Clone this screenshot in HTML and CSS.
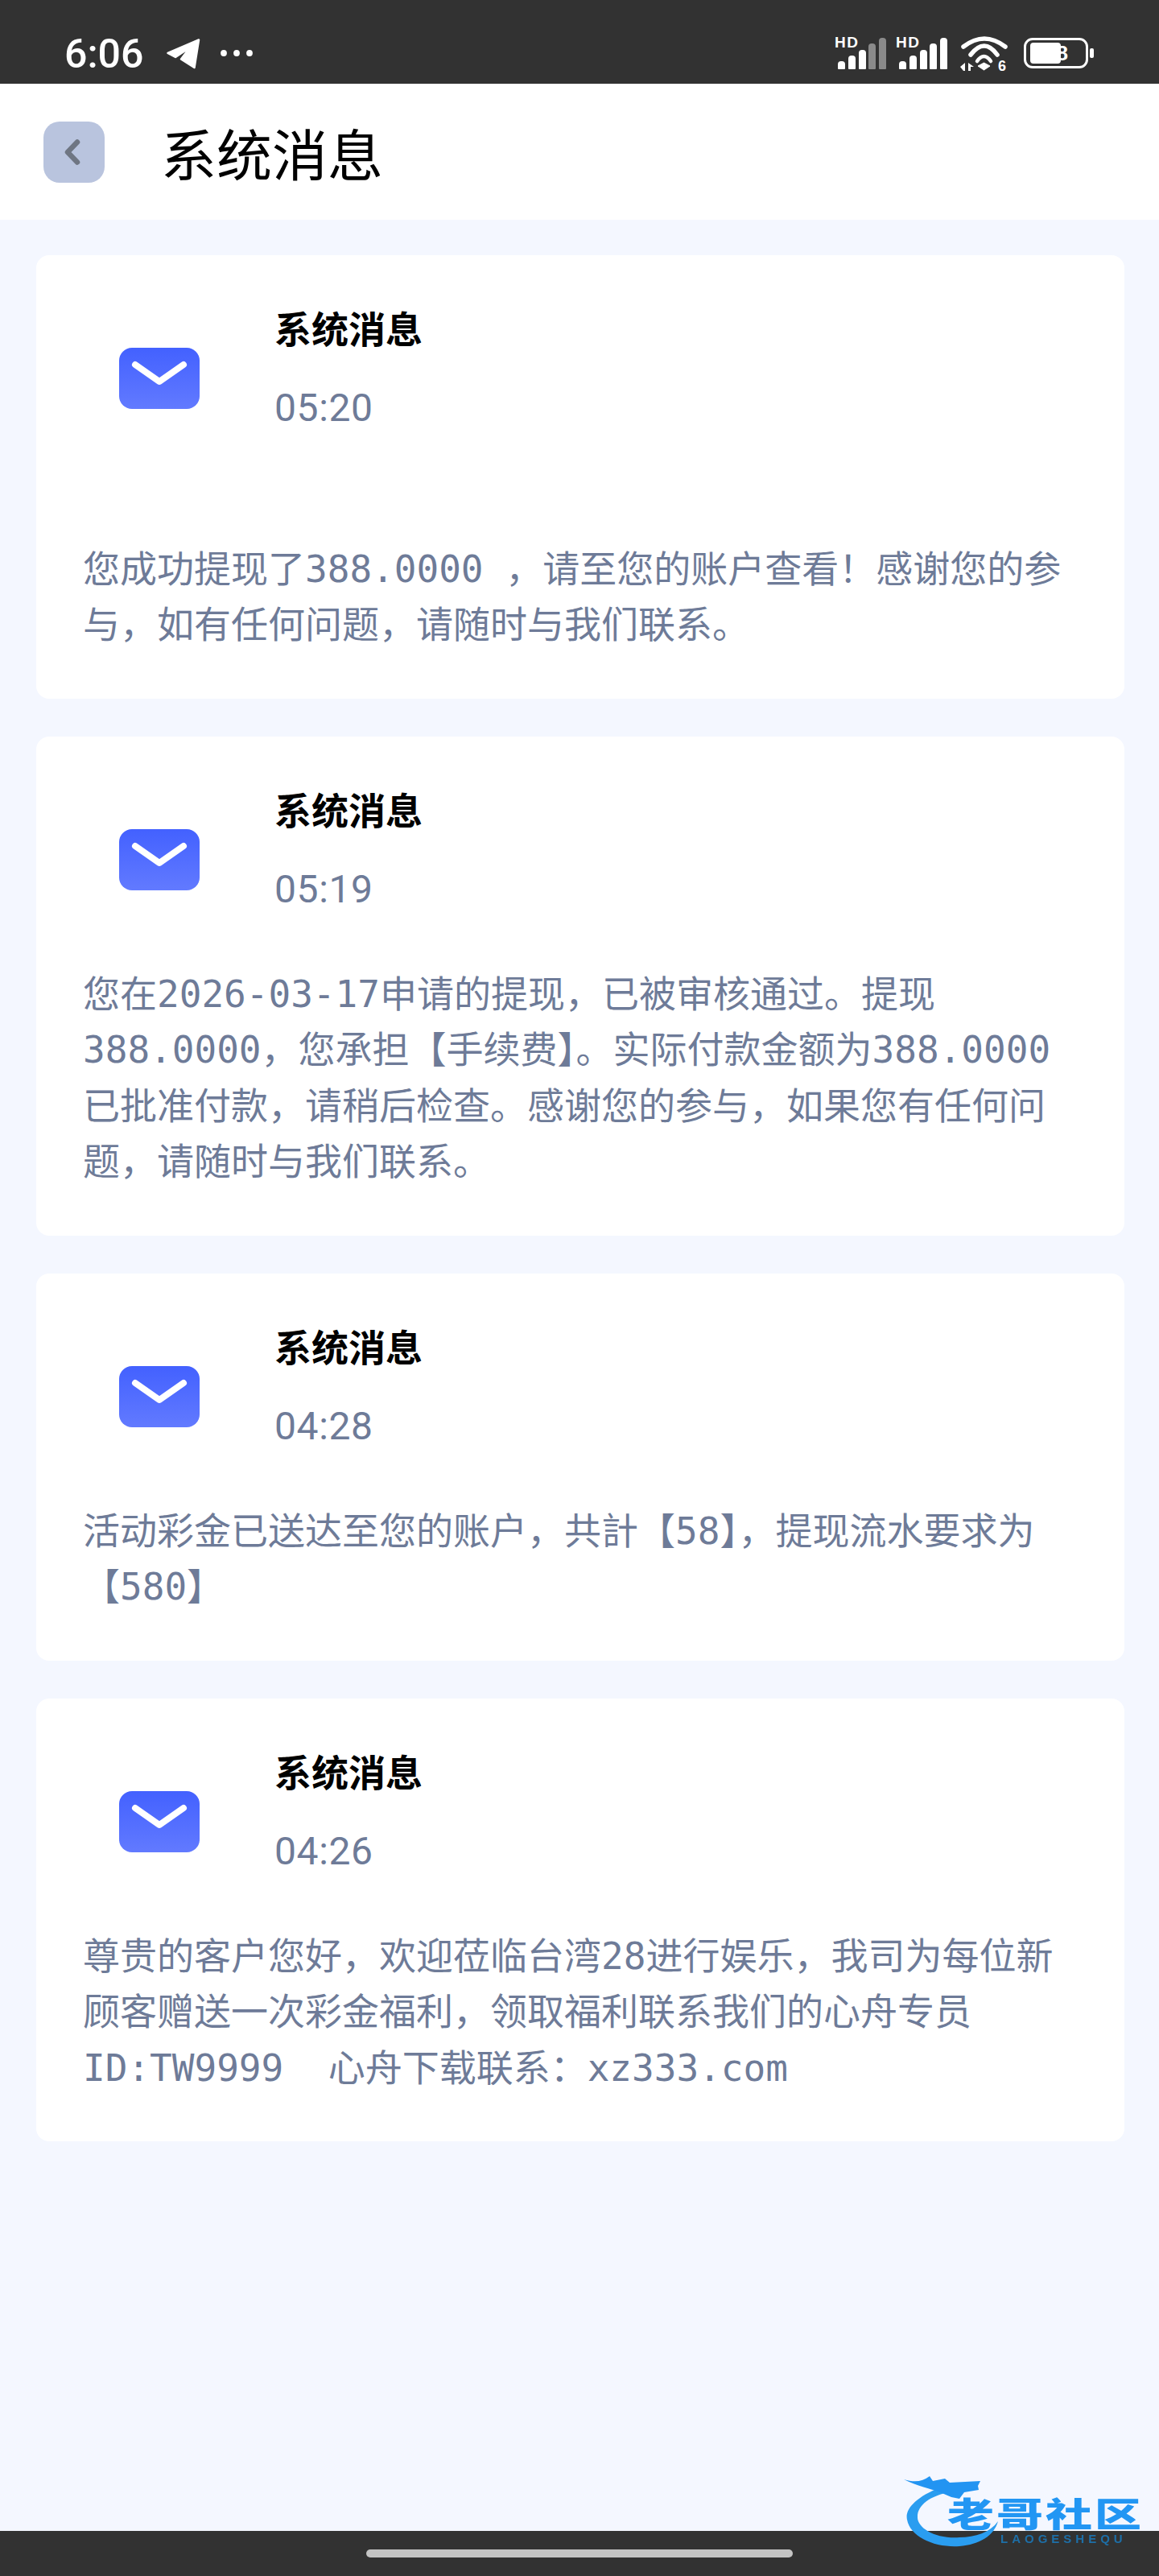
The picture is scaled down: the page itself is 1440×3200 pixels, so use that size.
FILE: index.html
```html
<!DOCTYPE html>
<html lang="zh-CN">
<head>
  <meta charset="UTF-8" />
  <title>系统消息</title>
  <link rel="stylesheet" href="styles.css">
</head>

<body>
  <div class="phone">
    <!-- status bar -->
    <div class="status-bar">
      <div class="status-left">
        <span class="clock">6:06</span>
        <svg class="icon-send" width="42" height="38" viewBox="0 0 42 38">
          <path d="M1.5 18 L40 1.5 L34.5 36 L18 25.5 L29 11 L11 23 Z" fill="#fff" stroke="#fff" stroke-width="2.5" stroke-linejoin="round"/>
        </svg>
        <svg class="icon-dots" width="40" height="8" viewBox="0 0 40 8">
          <circle cx="4" cy="4" r="3.9" fill="#fff"/>
          <circle cx="20" cy="4" r="3.9" fill="#fff"/>
          <circle cx="36" cy="4" r="3.9" fill="#fff"/>
        </svg>
      </div>
      <div class="status-right">
        <div class="signal">
          <span class="hd">HD</span>
          <div class="bars">
            <i class="b1"></i><i class="b2"></i><i class="b3"></i><i class="b4 off"></i><i class="b5 off"></i>
          </div>
        </div>
        <div class="signal">
          <span class="hd">HD</span>
          <div class="bars">
            <i class="b1"></i><i class="b2"></i><i class="b3"></i><i class="b4"></i><i class="b5"></i>
          </div>
        </div>
        <svg class="icon-wifi" width="60" height="48" viewBox="0 0 60 48">
          <path d="M4 14 Q30 -6 56 14" fill="none" stroke="#fff" stroke-width="5.5" stroke-linecap="round"/>
          <path d="M13 24 Q30 2 46 24" fill="none" stroke="#fff" stroke-width="5.5" stroke-linecap="round"/>
          <path d="M21 32 Q29.5 20 38 32" fill="none" stroke="#fff" stroke-width="4.5" stroke-linecap="round"/>
          <path d="M22 38 L29.5 34 L37 38 L29.5 43 Z" fill="#fff" stroke="#fff" stroke-width="1" stroke-linejoin="round"/>
          <path d="M0 39 L6 34 V44 H4 Z M10 44 V34 L17 39 H13 V44 Z" fill="#fff"/>
          <text x="47" y="44" class="wifi-six">6</text>
        </svg>
        <div class="battery">
          <div class="battery-case">
            <div class="battery-fill"><span class="battery-num">38</span></div>
          </div>
          <div class="battery-nub"></div>
        </div>
      </div>
    </div>

    <!-- header -->
    <div class="page-header">
      <button class="back-btn" aria-label="返回">
        <svg class="back-arrow" width="20" height="32" viewBox="0 0 20 32">
          <path d="M16 3.5 L4 16 L16 28.5" fill="none" stroke="#6f7683" stroke-width="6.5" stroke-linecap="round" stroke-linejoin="round"/>
        </svg>
      </button>
      <h1 class="page-title">系统消息</h1>
    </div>

    <!-- message list -->
    <div class="msg-list">
      <div class="msg-card">
        <div class="msg-head">
          <svg class="mail-icon" width="100" height="76" viewBox="0 0 100 76">
            <rect width="100" height="76" rx="16" fill="url(#mailGrad)"/>
            <path d="M20 21 L50 42 L80 21" fill="none" stroke="#fff" stroke-width="8" stroke-linecap="round" stroke-linejoin="round"/>
          </svg>
          <div class="msg-meta">
            <div class="msg-title">系统消息</div>
            <div class="msg-time">05:20</div>
          </div>
        </div>
        <div class="msg-text"><br>您成功提现了388.0000 ，请至您的账户查看！感谢您的参与，如有任何问题，请随时与我们联系。</div>
      </div>

      <div class="msg-card">
        <div class="msg-head">
          <svg class="mail-icon" width="100" height="76" viewBox="0 0 100 76">
            <rect width="100" height="76" rx="16" fill="url(#mailGrad)"/>
            <path d="M20 21 L50 42 L80 21" fill="none" stroke="#fff" stroke-width="8" stroke-linecap="round" stroke-linejoin="round"/>
          </svg>
          <div class="msg-meta">
            <div class="msg-title">系统消息</div>
            <div class="msg-time">05:19</div>
          </div>
        </div>
        <div class="msg-text">您在2026-03-17申请的提现，已被审核通过。提现388.0000，您承担【手续费】。实际付款金额为388.0000已批准付款，请稍后检查。感谢您的参与，如果您有任何问题，请随时与我们联系。</div>
      </div>

      <div class="msg-card">
        <div class="msg-head">
          <svg class="mail-icon" width="100" height="76" viewBox="0 0 100 76">
            <rect width="100" height="76" rx="16" fill="url(#mailGrad)"/>
            <path d="M20 21 L50 42 L80 21" fill="none" stroke="#fff" stroke-width="8" stroke-linecap="round" stroke-linejoin="round"/>
          </svg>
          <div class="msg-meta">
            <div class="msg-title">系统消息</div>
            <div class="msg-time">04:28</div>
          </div>
        </div>
        <div class="msg-text">活动彩金已送达至您的账户，共計【58】，提现流水要求为【580】</div>
      </div>

      <div class="msg-card">
        <div class="msg-head">
          <svg class="mail-icon" width="100" height="76" viewBox="0 0 100 76">
            <rect width="100" height="76" rx="16" fill="url(#mailGrad)"/>
            <path d="M20 21 L50 42 L80 21" fill="none" stroke="#fff" stroke-width="8" stroke-linecap="round" stroke-linejoin="round"/>
          </svg>
          <div class="msg-meta">
            <div class="msg-title">系统消息</div>
            <div class="msg-time">04:26</div>
          </div>
        </div>
        <div class="msg-text">尊贵的客户您好，欢迎莅临台湾28进行娱乐，我司为每位新顾客赠送一次彩金福利，领取福利联系我们的心舟专员ID:TW9999&nbsp;&nbsp;心舟下载联系：xz333.com</div>
      </div>
    </div>

    <!-- bottom nav bar -->
    <div class="nav-bar">
      <div class="home-pill"></div>
    </div>

    <!-- watermark over the bottom edge -->
    <div class="watermark">
      <svg class="wm-dragon" width="130" height="100" viewBox="0 0 130 100">
        <path d="M46 18 C16 30 2 45 5 58 C9 80 40 93 70 91 C95 89 113 78 118 60 C108 74 90 80 70 80 C40 82 17 68 18 54 C18 40 34 28 58 24 Z" fill="#2a9df0"/>
        <path d="M1 8 C14 12 24 11 33 4 L37 10 L52 7 L58 12 L96 10 L93 16 L94 21 L76 24 L70 32 L60 30 L46 24 C36 20 16 16 1 8 Z" fill="#2294f2"/>
      </svg>
      <div class="wm-name">老哥社区</div>
      <div class="wm-sub">LAOGESHEQU</div>
    </div>

    <!-- shared gradient for the mail icons -->
    <svg class="defs" width="0" height="0">
      <defs>
        <linearGradient id="mailGrad" x1="0" y1="0" x2="0" y2="1">
          <stop offset="0" stop-color="#4361ff"/>
          <stop offset="1" stop-color="#627aff"/>
        </linearGradient>
      </defs>
    </svg>
  </div>
</body>
</html>
```

FILE: styles.css
```css
body {
  margin: 0;
  padding: 0;
  background: #f4f7ff;
  font-family: "Noto Sans CJK SC", sans-serif;
}

.phone {
  position: relative;
  width: 1440px;
  height: 3200px;
  display: flex;
  flex-direction: column;
  overflow: hidden;
}

/* status bar */
.status-bar {
  height: 104px;
  flex-shrink: 0;
  background: #323232;
  display: flex;
  justify-content: space-between;
  align-items: flex-start;
  padding: 0 81px 0 80px;
  box-sizing: border-box;
}
.status-left {
  display: flex;
  align-items: center;
  height: 104px;
  padding-top: 30px;
  box-sizing: border-box;
}
.clock {
  font-family: Roboto, sans-serif;
  font-weight: 500;
  font-size: 50px;
  line-height: 44px;
  color: #fff;
  width: 127px;
}
.icon-send {
  margin-right: 25px;
}
.icon-dots {
  margin-top: -2px;
}
.status-right {
  display: flex;
  align-items: flex-start;
  padding-top: 45px;
}
.signal {
  position: relative;
  width: 60px;
  height: 41px;
  margin-right: 16px;
}
.hd {
  position: absolute;
  left: -4px;
  top: 0;
  font-family: "Liberation Sans", sans-serif;
  font-weight: 700;
  font-size: 19px;
  letter-spacing: 1.5px;
  line-height: 16px;
  color: #fff;
}
.bars {
  position: absolute;
  right: 0;
  bottom: 0;
  display: flex;
  align-items: flex-end;
  gap: 3.75px;
}
.bars i {
  display: block;
  width: 9px;
  background: #fff;
  border-radius: 4px 4px 1px 1px;
}
.bars .off {
  background: #8a8a8a;
}
.b1 { height: 10px; }
.b2 { height: 17px; }
.b3 { height: 24px; }
.b4 { height: 32px; }
.b5 { height: 39px; }

.icon-wifi {
  margin: -1px 19px 0 0;
}
.wifi-six {
  font-family: "Liberation Sans", sans-serif;
  font-weight: 700;
  font-size: 18px;
  fill: #fff;
}
.battery {
  display: flex;
  align-items: center;
  margin-top: 2px;
}
.battery-case {
  width: 80px;
  height: 38px;
  border: 3px solid #fff;
  border-radius: 11px;
  box-sizing: border-box;
  padding: 3px 5px;
}
.battery-fill {
  width: 38px;
  height: 100%;
  background: #fff;
  border-radius: 4px;
  position: relative;
}
.battery-num {
  position: absolute;
  right: -9px;
  top: -1px;
  font-family: "Liberation Sans", sans-serif;
  font-weight: 700;
  font-size: 26px;
  line-height: 28px;
  color: #fff;
}
.battery-nub {
  width: 5px;
  height: 12px;
  margin-left: 2px;
  background: #fff;
  border-radius: 2px;
}

/* page header */
.page-header {
  height: 169px;
  flex-shrink: 0;
  background: #fff;
  display: flex;
  align-items: center;
  padding-left: 54px;
  box-sizing: border-box;
}
.back-btn {
  width: 76px;
  height: 76px;
  padding: 0;
  border: none;
  border-radius: 20px;
  background: #b9c4de;
  display: flex;
  align-items: center;
  justify-content: center;
}
.back-arrow {
  margin-right: 4px;
}
.page-title {
  margin: 0 0 0 70px;
  font-size: 69px;
  font-weight: 400;
  line-height: 80px;
  color: #000;
}

/* message cards */
.msg-list {
  flex: 1;
  display: flex;
  flex-direction: column;
  gap: 47px;
  padding: 44px 43px 0 45px;
}
.msg-card {
  background: #fff;
  border-radius: 16px;
  padding: 58px 58px 56px;
}
.msg-head {
  display: flex;
  align-items: flex-start;
  height: 165px;
}
.mail-icon {
  flex-shrink: 0;
  margin: 57px 0 0 45px;
}
.msg-meta {
  margin-left: 93px;
  padding-top: 1px;
}
.msg-title {
  font-size: 46px;
  font-weight: 700;
  line-height: 60px;
  color: #000;
}
.msg-time {
  margin-top: 41px;
  font-family: Roboto, sans-serif;
  font-size: 48px;
  letter-spacing: 0.6px;
  line-height: 60px;
  color: #6e7b98;
}
.msg-text {
  margin-top: 63px;
  font-family: "DejaVu Sans Mono", "Noto Sans CJK SC", monospace;
  font-size: 46px;
  line-height: 69.5px;
  color: #6e7b98;
}

/* bottom bar */
.nav-bar {
  position: absolute;
  left: 0;
  right: 0;
  bottom: 0;
  height: 56px;
  background: #323232;
}
.home-pill {
  width: 530px;
  height: 10px;
  margin: 23px auto 0;
  border-radius: 5px;
  background: #c4c4c4;
}

/* watermark */
.watermark {
  position: absolute;
  left: 1122px;
  top: 3072px;
  width: 300px;
  height: 100px;
  filter: blur(0.7px);
}
.wm-dragon {
  position: absolute;
  left: 0;
  top: 0;
}
.wm-name {
  position: absolute;
  left: 55px;
  top: 27px;
  font-size: 58px;
  font-weight: 900;
  line-height: 60px;
  letter-spacing: 3px;
  color: #2296f3;
  white-space: nowrap;
  transform: scaleY(0.72);
  transform-origin: left top;
}
.wm-sub {
  position: absolute;
  left: 121px;
  top: 74px;
  font-family: "Liberation Sans", sans-serif;
  font-size: 15px;
  font-weight: 700;
  line-height: 15px;
  letter-spacing: 5px;
  color: #1d6fa8;
  white-space: nowrap;
}
.defs {
  position: absolute;
}
```
